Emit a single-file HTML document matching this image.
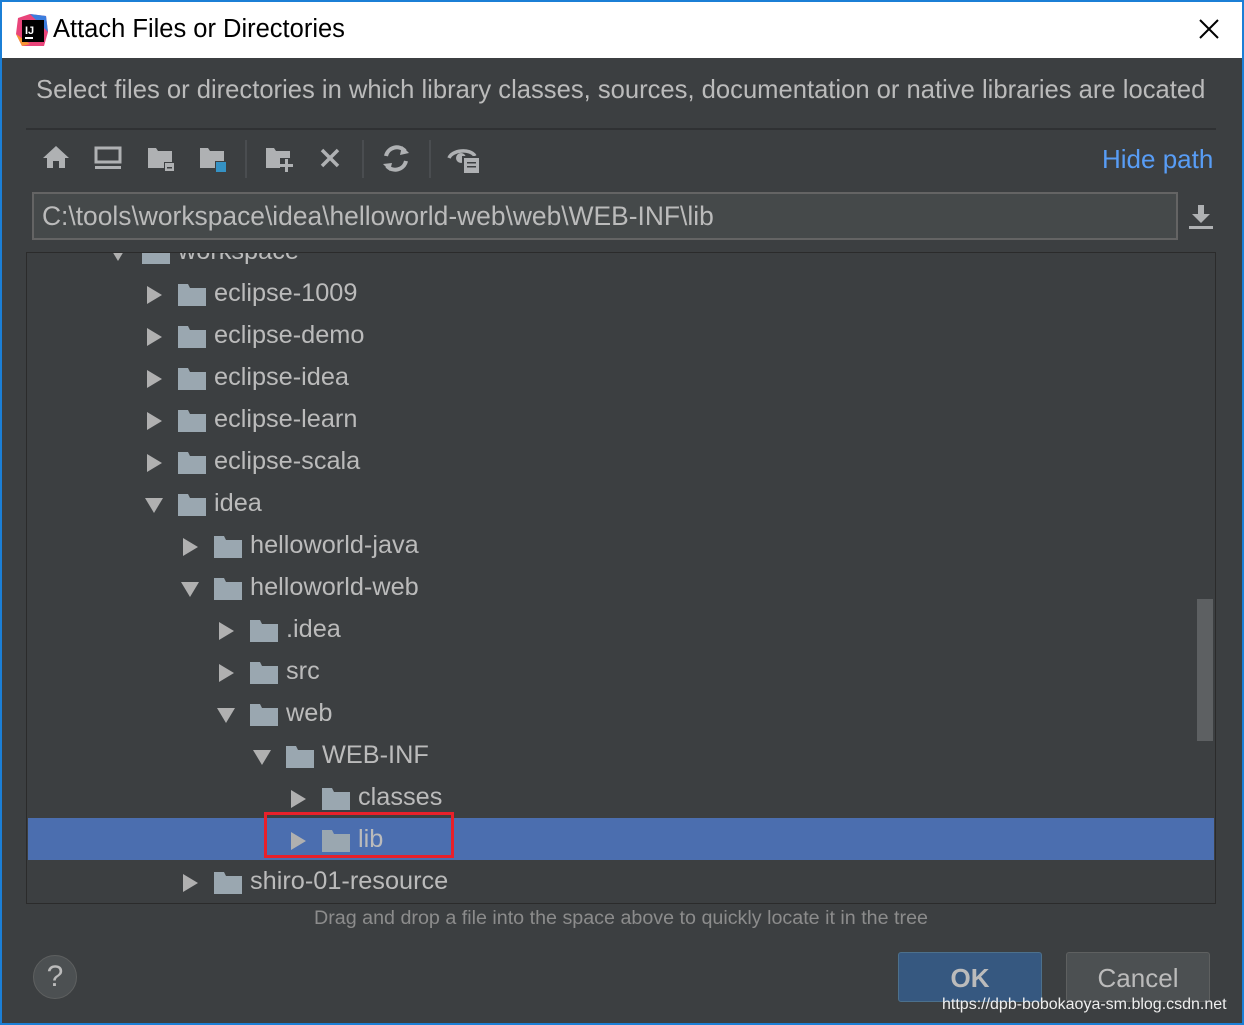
<!DOCTYPE html>
<html><head><meta charset="utf-8"><style>
*{margin:0;padding:0;box-sizing:border-box}
html,body{overflow:hidden}
body{width:1244px;height:1025px;background:#1b7fd6;font-family:"Liberation Sans",sans-serif;position:relative}
.win{position:absolute;left:2px;top:2px;width:1240px;height:1021px;background:#3c3f41;overflow:hidden}
.title{position:absolute;left:0;top:0;width:1240px;height:56px;background:#fff}
.title .t{position:absolute;left:51px;top:13px;font-size:25.5px;color:#000}
.ab{position:absolute;color:#bbbbbb;white-space:nowrap}
.folder{position:absolute;width:28px;height:22px}
.row{position:absolute;width:1186px;height:42px}
</style></head><body>
<div class="win">
<div class="title">
<svg style="position:absolute;left:14px;top:12px" width="34" height="34" viewBox="0 0 34 34">
<polygon points="2,4 14,0 30,2 32,18 28,32 6,32 0,20" fill="#e9447a"/>
<polygon points="14,0 30,2 32,18" fill="#3b7ddd"/>
<polygon points="0,20 6,32 14,30" fill="#f79433"/>
<rect x="6" y="6" width="22" height="22" fill="#000"/>
<text x="9" y="20" font-size="11" font-weight="bold" fill="#fff" font-family="Liberation Sans">IJ</text>
<rect x="9" y="23" width="8" height="2" fill="#fff"/>
</svg>
<div class="t">Attach Files or Directories</div>
<svg style="position:absolute;left:1196px;top:16px" width="22" height="22"><path d="M2 2L20 20M20 2L2 20" stroke="#000" stroke-width="2"/></svg>
</div>
<div class="ab" style="left:34px;top:74px;font-size:25.6px">Select files or directories in which library classes, sources, documentation or native libraries are located</div>
<div style="position:absolute;left:24px;top:126px;width:1190px;height:2px;background:#2f3133"></div>
<svg style="position:absolute;left:34px;top:138px" width="450" height="40" viewBox="36 140 450 40" fill="#afb1b3">
<path d="M43 158L56 146L69 158H65V168H59V161H53V168H47V158Z"/>
<rect x="96" y="148" width="24" height="14" fill="none" stroke="#afb1b3" stroke-width="3"/><rect x="95" y="166" width="26" height="3"/>
<path d="M148 148H156L158 151H172V168H148Z"/><rect x="164" y="162" width="10" height="9" fill="#3c3f41"/><rect x="165" y="163" width="9" height="8"/><rect x="167" y="167" width="5" height="1.5" fill="#3c3f41"/>
<path d="M200 148H208L210 151H224V168H200Z"/><rect x="215" y="161" width="11" height="11" fill="#3c3f41"/><rect x="216" y="162" width="10" height="10" fill="#3592c4"/>
<rect x="245" y="138" width="2" height="40" fill="#4a4d50"/>
<path d="M266 148H274L276 151H290V168H266Z"/><rect x="280" y="158" width="14" height="14" fill="#3c3f41"/><path d="M285 159H288V164H293V167H288V172H285V167H280V164H285Z"/>
<path d="M322 150L338 166M338 150L322 166" stroke="#afb1b3" stroke-width="3.5"/>
<rect x="362" y="138" width="2" height="40" fill="#4a4d50"/>
<path d="M386 156A11 11 0 0 1 405 151" fill="none" stroke="#afb1b3" stroke-width="4"/><path d="M402 146L409 153L400 155Z"/>
<path d="M406 161A11 11 0 0 1 387 166" fill="none" stroke="#afb1b3" stroke-width="4"/><path d="M390 171L383 164L392 163Z"/>
<rect x="429" y="138" width="2" height="40" fill="#4a4d50"/>
<path d="M449 158C452 150 470 148 475 156" fill="none" stroke="#afb1b3" stroke-width="3.5"/><circle cx="461" cy="158" r="5"/>
<rect x="462" y="156" width="17" height="17" fill="#3c3f41"/><rect x="464" y="158" width="15" height="15"/><rect x="467" y="162" width="9" height="1.5" fill="#3c3f41"/><rect x="467" y="166" width="9" height="1.5" fill="#3c3f41"/>
</svg>
<div class="ab" style="left:1100px;top:142px;font-size:26px;color:#589df6">Hide path</div>
<div style="position:absolute;left:30px;top:190px;width:1146px;height:48px;background:#45494a;border:2px solid #646464"></div>
<div class="ab" style="left:40px;top:199px;font-size:26.4px">C:\tools\workspace\idea\helloworld-web\web\WEB-INF\lib</div>
<svg style="position:absolute;left:1186px;top:202px" width="26" height="26"><path d="M10 1H16V10H22L13 19L4 10H10Z" fill="#afb1b3"/><rect x="1" y="22" width="24" height="3" fill="#afb1b3"/></svg>
<div style="position:absolute;left:24px;top:250px;width:1190px;height:652px;border:1px solid #2b2b2b;background:#3c3f41;overflow:hidden">
<div id="tree" style="position:absolute;left:-32px;top:-251px;width:1244px;height:900px">
<div class="row" style="left:33px;top:816px;background:#4b6eaf"></div>
<div style="position:absolute;left:269px;top:810px;width:190px;height:46px;border:3px solid #e8202a"></div>
</div>
<div style="position:absolute;left:1170px;top:346px;width:16px;height:142px;background:#5d6062"></div>
</div>
<div class="ab" style="left:312px;top:905px;font-size:19.7px;color:#8c8c8c">Drag and drop a file into the space above to quickly locate it in the tree</div>
<div style="position:absolute;left:31px;top:953px;width:44px;height:44px;border-radius:50%;background:#4c5052;border:1px solid #5e6060;color:#bbb;font-size:30px;text-align:center;line-height:42px">?</div>
<div style="position:absolute;left:896px;top:950px;width:144px;height:50px;background:#365880;border:1px solid #4c708c;border-radius:3px;color:#bbb;font-size:26px;font-weight:bold;text-align:center;line-height:50px">OK</div>
<div style="position:absolute;left:1064px;top:950px;width:144px;height:50px;background:#4c5052;border:1px solid #5e6060;border-radius:3px;color:#bbb;font-size:26px;text-align:center;line-height:50px">Cancel</div>
<div class="ab" style="left:940px;top:994px;font-size:16px;color:#eee">https://dpb-bobokaoya-sm.blog.csdn.net</div>
</div>
<script>
var rows=[[0,'workspace',1],[1,'eclipse-1009',0],[1,'eclipse-demo',0],[1,'eclipse-idea',0],[1,'eclipse-learn',0],[1,'eclipse-scala',0],[1,'idea',1],[2,'helloworld-java',0],[2,'helloworld-web',1],[3,'.idea',0],[3,'src',0],[3,'web',1],[4,'WEB-INF',1],[5,'classes',0],[5,'lib',0],[2,'shiro-01-resource',0]];
var t=document.getElementById('tree'),h='';
rows.forEach(function(r,i){var cy=251+42*i,ax=115+36*r[0]-2,fx=ax+34,tx=ax+70;
var arr=r[2]?'<svg style="position:absolute;left:'+ax+'px;top:'+(cy-9)+'px" width="20" height="18"><path d="M1 2H19L10 17Z" fill="#b0b0b0"/></svg>':'<svg style="position:absolute;left:'+(ax+1)+'px;top:'+(cy-10)+'px" width="18" height="20"><path d="M2 1V19L17 10Z" fill="#b0b0b0"/></svg>';
h+=arr+'<svg class="folder" style="left:'+fx+'px;top:'+(cy-11)+'px" viewBox="0 0 28 22"><path d="M0 0H10L12 4H28V22H0Z" fill="#9aa7b0"/></svg><div class="ab" style="left:'+tx+'px;top:'+(cy-16)+'px;font-size:25.3px">'+r[1]+'</div>';});
t.insertAdjacentHTML('beforeend',h);
</script>
</body></html>
